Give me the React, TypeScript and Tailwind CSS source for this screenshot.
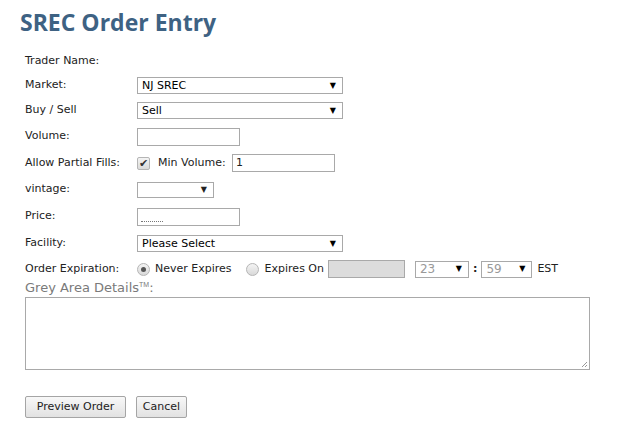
import React from "react";

const font = { fontFamily: '"DejaVu Sans", Verdana, sans-serif' };

function Select({ value, width, muted }: { value: string; width: string; muted?: boolean }) {
  return (
    <div
      className={`flex h-[17px] items-center justify-between border border-[#a9a9a9] bg-white pl-[4px] pr-[6px] ${width} ${
        muted ? "text-[12px] text-[#999]" : "text-[11px] text-black"
      }`}
    >
      <span className="leading-none">{value}</span>
      <span className="text-[8px] leading-none text-black">▼</span>
    </div>
  );
}

function TextBox({ width, value, grey }: { width: string; value?: string; grey?: boolean }) {
  return (
    <div
      className={`flex h-[18px] items-center border border-[#a9a9a9] pl-[3px] text-[11px] ${width} ${
        grey ? "bg-[#dcdcdc]" : "bg-white"
      }`}
    >
      {value}
    </div>
  );
}

function Row({ label, h, children }: { label: string; h: string; children?: React.ReactNode }) {
  return (
    <div className={`flex items-center ${h}`}>
      <div className="w-[112px] shrink-0">{label}</div>
      {children}
    </div>
  );
}

function Radio({ checked }: { checked?: boolean }) {
  return (
    <span className="flex h-[13px] w-[13px] items-center justify-center rounded-full border border-[#b5b5b5] bg-gradient-to-b from-[#f4f4f4] to-[#d9d9d9]">
      {checked && <span className="h-[5px] w-[5px] rounded-full bg-[#555]" />}
    </span>
  );
}

export default function App() {
  return (
    <div className="h-[436px] w-[624px] bg-white text-[11px] text-[#222]" style={font}>
      <h1
        className="pl-[20px] pt-[7px] text-[23px] font-bold leading-[30px] text-[#3e6283]"
        style={{ fontFamily: '"Open Sans", sans-serif' }}
      >
        SREC Order Entry
      </h1>

      <div className="mt-[12px] pl-[25px]">
        <Row label="Trader Name:" h="h-[24px]" />
        <Row label="Market:" h="h-[25px]">
          <Select value="NJ SREC" width="w-[206px]" />
        </Row>
        <Row label="Buy / Sell" h="h-[25px]">
          <Select value="Sell" width="w-[206px]" />
        </Row>
        <Row label="Volume:" h="h-[27px]">
          <TextBox width="w-[103px]" />
        </Row>
        <Row label="Allow Partial Fills:" h="h-[26px]">
          <span className="flex h-[13px] w-[13px] items-center justify-center rounded-[2px] border border-[#b5b5b5] bg-gradient-to-b from-[#f4f4f4] to-[#dadada] text-[11px] font-bold leading-none text-[#333]">
            ✔
          </span>
          <span className="ml-[8px] w-[74px]">Min Volume:</span>
          <TextBox width="w-[103px]" value="1" />
        </Row>
        <Row label="vintage:" h="h-[27px]">
          <div className="flex h-[16px] w-[77px] items-center justify-end border border-[#a9a9a9] pr-[6px] text-[8px]">▼</div>
        </Row>
        <Row label="Price:" h="h-[27px]">
          <div className="flex h-[18px] w-[103px] items-end border border-[#a9a9a9] pb-[2px] pl-[3px]">
            <span className="h-[2px] w-[22px] border-t border-dotted border-[#777]" />
          </div>
        </Row>
        <Row label="Facility:" h="h-[27px]">
          <Select value="Please Select" width="w-[206px]" />
        </Row>
        <Row label="Order Expiration:" h="h-[24px]">
          <Radio checked />
          <span className="ml-[5px]">Never Expires</span>
          <span className="ml-[14px]">
            <Radio />
          </span>
          <span className="ml-[6px]">Expires On</span>
          <div className="ml-[4px]">
            <TextBox width="w-[77px]" grey />
          </div>
          <div className="ml-[10px]">
            <Select value="23" width="w-[54px]" muted />
          </div>
          <span className="mx-[4px] font-bold">:</span>
          <Select value="59" width="w-[51px]" muted />
          <span className="ml-[5px]">EST</span>
        </Row>
        <div className="text-[13px] leading-[14px] text-[#7a7a7a]">
          Grey Area Details
          <span className="relative top-[-5px] text-[7px]" style={{ fontFamily: '"Liberation Sans", sans-serif' }}>
            TM
          </span>
          :
        </div>
        <div className="relative mt-[0px] h-[73px] w-[565px] border border-[#a9a9a9]">
          <svg className="absolute bottom-[1px] right-[1px]" width="8" height="8" viewBox="0 0 8 8">
            <path d="M7 2 L2 7 M7 5 L5 7" stroke="#999" strokeWidth="1" />
          </svg>
        </div>
        <div className="mt-[26px] flex gap-[10px]">
          <button className="h-[22px] w-[101px] rounded-[2px] border border-[#a5a5a5] bg-gradient-to-b from-[#f8f8f8] to-[#e2e2e2] text-[11px] text-[#222]">
            Preview Order
          </button>
          <button className="h-[22px] w-[51px] rounded-[2px] border border-[#a5a5a5] bg-gradient-to-b from-[#f8f8f8] to-[#e2e2e2] text-[11px] text-[#222]">
            Cancel
          </button>
        </div>
      </div>
    </div>
  );
}
